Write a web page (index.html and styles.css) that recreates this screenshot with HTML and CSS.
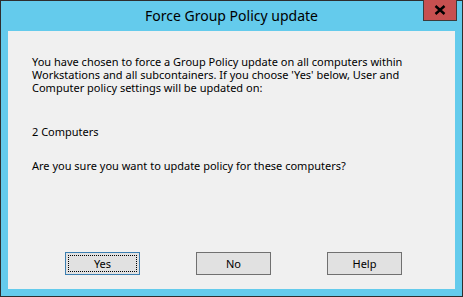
FILE: index.html
```html
<!DOCTYPE html>
<html>
<head>
<meta charset="utf-8">
<link rel="stylesheet" href="styles.css">
</head>
<body>
<div class="window">
  <div class="titlebar">
    <span class="title">Force Group Policy update</span>
    <div class="close">
      <svg width="12" height="10" viewBox="0 0 12 10"><path d="M1.5 1 L10.5 9 M10.5 1 L1.5 9" stroke="#000" stroke-width="2.4" fill="none"/></svg>
    </div>
  </div>
  <div class="client">
    <p class="intro">You have chosen to force a Group Policy update on all computers within Workstations and all subcontainers. If you choose 'Yes' below, User and Computer policy settings will be updated on:</p>
    <p class="count">2 Computers</p>
    <p class="question">Are you sure you want to update policy for these computers?</p>
    <div class="buttons">
      <button class="btn default"><span class="focus">Yes</span></button>
      <button class="btn"><span class="focus none">No</span></button>
      <button class="btn"><span class="focus none">Help</span></button>
    </div>
  </div>
</div>
</body>
</html>
```
FILE: styles.css
```css
html, body { margin: 0; padding: 0; }
body { width: 463px; height: 297px; overflow: hidden; font-family: "Noto Sans", "Liberation Sans", Arial, sans-serif; }
.window {
  position: relative;
  width: 463px; height: 297px; box-sizing: border-box;
  border: 1px solid #2e2e2e;
  background: #64cbec;
  display: flex; flex-direction: column;
}
.titlebar {
  height: 30px; display: flex; align-items: center; justify-content: center;
}
.title {
  font-family: "Noto Sans", "Open Sans", sans-serif; font-size: 14px; color: #000;
  margin-top: -1px;
}
.close {
  position: absolute; top: -1px; right: 5px;
  width: 34px; height: 21px; box-sizing: border-box;
  background: #c75050; border: 1px solid #3c3c3c; border-top: none;
  display: flex; align-items: center; justify-content: center;
}
.client {
  flex: 1; margin: 0 7px 7px 7px;
  background: #f0f0f0;
  display: flex; flex-direction: column;
  padding: 24px 24px 14px 24px;
  font-size: 11px; color: #000; line-height: 13px;
}
.client p { margin: 0; }
.count { margin-top: 31px !important; }
.question { margin-top: 21px !important; }
.buttons {
  margin-top: auto; display: flex; gap: 56px; padding-left: 33px;
}
.btn {
  width: 75px; height: 23px; box-sizing: border-box;
  background: #e1e1e1; border: 1px solid #707070;
  font-family: inherit; font-size: 11px; color: #000;
  padding: 2px; margin: 0; display: flex;
}
.btn.default { border-color: #3c7fb1; }
.focus {
  flex: 1; display: flex; align-items: center; justify-content: center;
  border: 1px dotted #000;
}
.focus.none { border-color: transparent; }
```
